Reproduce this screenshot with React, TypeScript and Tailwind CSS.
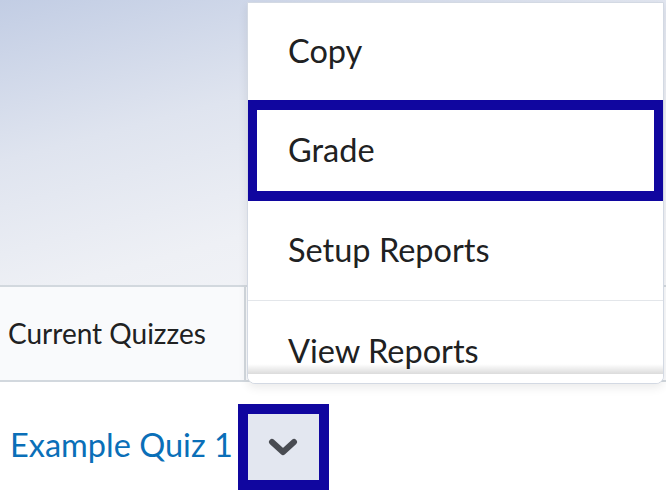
export default function App() {
  const font = { fontFamily: 'Lato, "Noto Sans", sans-serif' };
  return (
    <div className="relative w-[666px] h-[490px] overflow-hidden bg-white" style={font}>
      {/* page header background */}
      <div className="h-[285px] bg-[linear-gradient(165deg,#c2cde4_0%,#dfe4ef_35%,#eef0f5_65%,#f5f6f9_100%)]" />

      {/* table header row */}
      <div className="flex h-[97px] border-y-2 border-[#d2d8de] bg-[#f9fafc]">
        <div className="w-[246px] border-r-2 border-[#d2d8de] flex items-center pl-[8px] pb-[2px] text-[28px] text-[#202122]">
          Current Quizzes
        </div>
        <div className="flex-1" />
      </div>

      {/* quiz row */}
      <div className="flex items-center h-[108px] pt-[22px]">
        <span className="pl-[10px] pr-[5px] pb-[4px] text-[32.5px] text-[#0a6fb8]">Example Quiz 1</span>
        <button className="w-[91px] h-[86px] border-[10px] border-[#10069f] bg-[#e3e7f0] flex items-center justify-center">
          <svg width="30" height="18" viewBox="0 0 30 18" fill="none">
            <path d="M4 4 L15 14 L26 4" stroke="#494c52" strokeWidth="6" strokeLinecap="round" strokeLinejoin="round" />
          </svg>
        </button>
      </div>

      {/* dropdown menu */}
      <div className="absolute left-[247px] top-[2px] w-[417px] h-[382px] bg-white border border-[#d3d9e3] rounded-b-[8px] overflow-hidden shadow-[0_4px_10px_rgba(0,0,0,0.08)] text-[32.5px] text-[#202122]">
        <div className="h-[98px] border-b border-[#e3e6ea] flex items-center pl-[40px]">Copy</div>
        <div className="relative h-[100px] border-b border-[#e3e6ea] flex items-center pl-[40px]">
          Grade
          <div className="absolute left-[-1px] right-[-1px] top-[-1px] bottom-[-1px] border-[10px] border-[#10069f]" />
        </div>
        <div className="h-[100px] border-b border-[#e3e6ea] flex items-center pl-[40px]">Setup Reports</div>
        <div className="h-[100px] flex items-center pl-[40px]">View Reports</div>
        <div className="absolute left-0 right-0 bottom-0 h-[10px] bg-white">
          <div className="absolute left-0 right-0 top-[-9px] h-[10px] bg-[linear-gradient(to_bottom,rgba(0,0,0,0)_0%,rgba(0,0,0,0.14)_100%)]" />
        </div>
      </div>
    </div>
  );
}
